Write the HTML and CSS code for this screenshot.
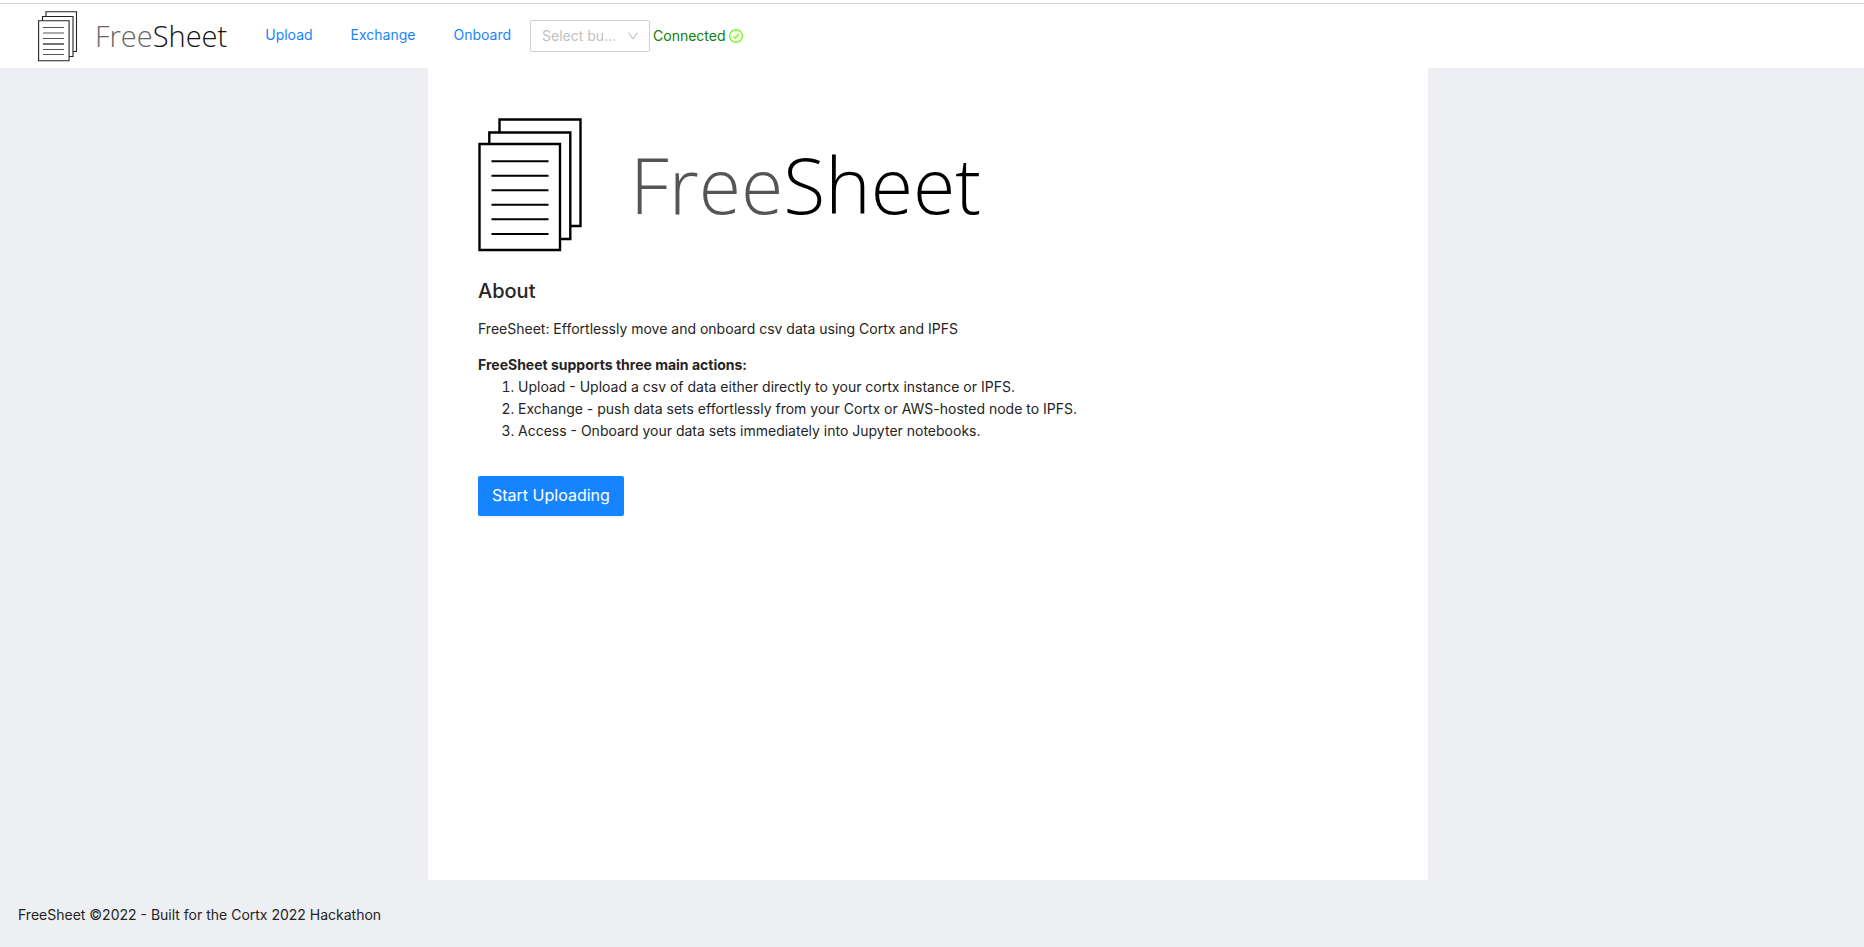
FILE: index.html
```html
<!DOCTYPE html>
<html lang="en">
<head>
<meta charset="utf-8">
<title>FreeSheet</title>
<link rel="stylesheet" href="styles.css">
</head>
<body>
<header class="header">
  <a class="brand" href="#">
    <svg class="brand-icon" viewBox="0 0 40 51" fill="#fff" stroke="#222" stroke-width="1.1" aria-hidden="true">
      <path d="M8 .8h30.5v39.7H8z"/>
      <path d="M4.500 5.500H35v40H4.500z"/>
      <path d="M.6 9.800h30.500v40H.6z"/>
      <path stroke="#555" d="M5 16.500h21M5 22h21M5 27.500h21M5 38.500h21M5 43.500h21"/>
      <path stroke="#000" d="M5 33h21"/>
    </svg>
    <span class="brand-name"><span class="brand-free">Free</span>Sheet</span>
  </a>
  <nav class="nav">
    <a href="#">Upload</a>
    <a href="#">Exchange</a>
    <a href="#">Onboard</a>
  </nav>
  <div class="picker">
    <select class="bucket" aria-label="Select bucket"><option>Select bucket</option></select>
    <svg class="chevron" viewBox="64 64 896 896" fill="#bfbfbf" aria-hidden="true"><path d="M884 256h-75c-5.100 0-9.900 2.500-12.900 6.600L512 654.200 227.900 262.600c-3-4.100-7.800-6.600-12.900-6.600h-75c-6.500 0-10.300 7.400-6.500 12.700l352.600 486.100c12.800 17.600 39 17.600 51.700 0l352.600-486.100c3.900-5.300.1-12.700-6.400-12.700z"/></svg>
  </div>
  <span class="status">Connected
    <svg class="status-icon" viewBox="0 0 14 14" fill="none" aria-hidden="true">
      <circle cx="7" cy="7" r="6.400" fill="#f6ffed" stroke="#7cf01c" stroke-width="1.200"/>
      <path d="M4.400 7.100l1.900 2.300 3.500-4.700" stroke="#7cf01c" stroke-width="1.200"/>
    </svg>
  </span>
</header>
<div class="page">
  <main class="content">
    <div class="hero">
      <svg class="hero-icon" viewBox="0 0 104 134" fill="#fff" stroke="#000" stroke-width="2.400" aria-hidden="true">
        <path d="M21.500 1.500h81v106.500h-81z"/>
        <path d="M11.300 14.500h81v106.500h-81z"/>
        <path d="M1.500 26h80.500v106H1.500z"/>
        <path stroke-width="2" d="M13.500 43.300h57M13.500 57.800h57M13.500 72.300h57M13.500 86.800h57M13.500 101.300h57M13.500 115.900h57"/>
      </svg>
      <span class="hero-name"><span class="hero-free">Free</span>Sheet</span>
    </div>
    <h1 class="title">About</h1>
    <p class="lead">FreeSheet: Effortlessly move and onboard csv data using Cortx and IPFS</p>
    <strong class="subtitle">FreeSheet supports three main actions:</strong>
    <ol class="actions">
      <li>Upload - Upload a csv of data either directly to your cortx instance or IPFS.</li>
      <li>Exchange - push data sets effortlessly from your Cortx or AWS-hosted node to IPFS.</li>
      <li>Access - Onboard your data sets immediately into Jupyter notebooks.</li>
    </ol>
    <button class="start" type="button">Start Uploading</button>
  </main>
</div>
<footer class="footer">FreeSheet ©2022 - Built for the Cortx 2022 Hackathon</footer>
</body>
</html>
```
FILE: styles.css
```css
* { box-sizing: border-box; }

body {
  margin: 0;
  min-height: 100vh;
  display: flex;
  flex-direction: column;
  background: #eeeff3;
  color: #242424;
  font: 14px/22px Inter, "Liberation Sans", sans-serif;
}

a { color: #1784ff; text-decoration: none; }

.header {
  display: flex;
  align-items: center;
  height: 68px;
  padding: 4px 38px 0;
  background: linear-gradient(#fff 3px, #d3d3d3 3px, #d3d3d3 4px, #fff 4px);
}

.brand { display: flex; align-items: center; gap: 17px; color: #111; }
.brand-icon { width: 40px; height: 51px; }
.brand-name { font: 300 29px/40px "Open Sans", sans-serif; }
.brand-free { color: #666; }

.nav { display: flex; gap: 38px; margin: 0 19px 0 38px; padding-bottom: 2px; }

.picker { display: grid; align-items: center; width: 120px; }
.bucket {
  grid-area: 1 / 1;
  width: 100%;
  height: 32px;
  padding: 0 28px 0 11px;
  border: 1px solid #d0d0d0;
  border-radius: 2px;
  background: #fff;
  color: #bfbfbf;
  font: inherit;
  appearance: none;
  text-overflow: ellipsis;
}
.chevron { grid-area: 1 / 1; justify-self: end; width: 12px; height: 12px; margin-right: 11px; pointer-events: none; }

.status { display: flex; align-items: center; gap: 3px; margin-left: 3px; color: #0b800b; }
.status-icon { width: 14px; height: 14px; }

.page { flex: 1; display: flex; justify-content: center; padding-right: 8px; }

.content {
  flex: 0 1 1000px;
  padding: 50px;
  background: #fff;
}

.hero { display: flex; align-items: center; gap: 48px; margin-bottom: 25px; color: #000; }
.hero-icon { width: 104px; height: 134px; }
.hero-name { font: 300 77px/120px "Open Sans", sans-serif; }
.hero-free { color: #555; }

.title { margin: 0 0 13px; font-size: 20px; line-height: 28px; font-weight: 500; }
.lead { margin: 0 0 14px; }
.subtitle { font-weight: 700; }
.actions { margin: 0 0 34px; padding-left: 40px; }

.start {
  height: 40px;
  padding: 0 14px 2px;
  border: 0;
  border-radius: 2px;
  background: #1784ff;
  box-shadow: 0 2px 0 rgba(0, 0, 0, .04);
  color: #fff;
  font: 16px/24px Inter, sans-serif;
}

.footer { padding: 24px 18px 21px; }
```
